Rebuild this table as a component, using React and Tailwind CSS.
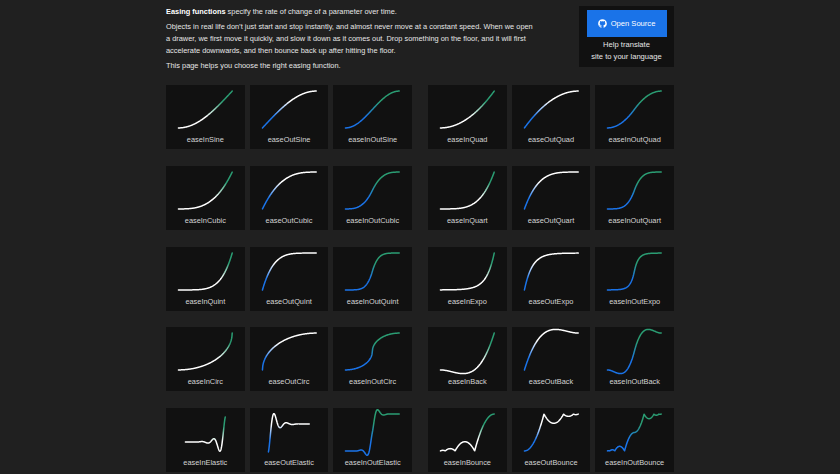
import { FaGithub } from "react-icons/fa";

const PI = Math.PI;
const c1 = 1.70158;
const c2 = c1 * 1.525;
const c3 = c1 + 1;
const c4 = (2 * PI) / 3;
const c5 = (2 * PI) / 4.5;

function bounceOut(x) {
  const n1 = 7.5625;
  const d1 = 2.75;
  if (x < 1 / d1) return n1 * x * x;
  if (x < 2 / d1) return n1 * (x -= 1.5 / d1) * x + 0.75;
  if (x < 2.5 / d1) return n1 * (x -= 2.25 / d1) * x + 0.9375;
  return n1 * (x -= 2.625 / d1) * x + 0.984375;
}

const fns = {
  easeInSine: (x) => 1 - Math.cos((x * PI) / 2),
  easeOutSine: (x) => Math.sin((x * PI) / 2),
  easeInOutSine: (x) => -(Math.cos(PI * x) - 1) / 2,
  easeInQuad: (x) => x * x,
  easeOutQuad: (x) => 1 - (1 - x) * (1 - x),
  easeInOutQuad: (x) => (x < 0.5 ? 2 * x * x : 1 - Math.pow(-2 * x + 2, 2) / 2),
  easeInCubic: (x) => x * x * x,
  easeOutCubic: (x) => 1 - Math.pow(1 - x, 3),
  easeInOutCubic: (x) => (x < 0.5 ? 4 * x * x * x : 1 - Math.pow(-2 * x + 2, 3) / 2),
  easeInQuart: (x) => x * x * x * x,
  easeOutQuart: (x) => 1 - Math.pow(1 - x, 4),
  easeInOutQuart: (x) => (x < 0.5 ? 8 * x * x * x * x : 1 - Math.pow(-2 * x + 2, 4) / 2),
  easeInQuint: (x) => x * x * x * x * x,
  easeOutQuint: (x) => 1 - Math.pow(1 - x, 5),
  easeInOutQuint: (x) => (x < 0.5 ? 16 * Math.pow(x, 5) : 1 - Math.pow(-2 * x + 2, 5) / 2),
  easeInExpo: (x) => (x === 0 ? 0 : Math.pow(2, 10 * x - 10)),
  easeOutExpo: (x) => (x === 1 ? 1 : 1 - Math.pow(2, -10 * x)),
  easeInOutExpo: (x) =>
    x === 0
      ? 0
      : x === 1
      ? 1
      : x < 0.5
      ? Math.pow(2, 20 * x - 10) / 2
      : (2 - Math.pow(2, -20 * x + 10)) / 2,
  easeInCirc: (x) => 1 - Math.sqrt(1 - x * x),
  easeOutCirc: (x) => Math.sqrt(1 - Math.pow(x - 1, 2)),
  easeInOutCirc: (x) =>
    x < 0.5
      ? (1 - Math.sqrt(1 - Math.pow(2 * x, 2))) / 2
      : (Math.sqrt(1 - Math.pow(-2 * x + 2, 2)) + 1) / 2,
  easeInBack: (x) => c3 * x * x * x - c1 * x * x,
  easeOutBack: (x) => 1 + c3 * Math.pow(x - 1, 3) + c1 * Math.pow(x - 1, 2),
  easeInOutBack: (x) =>
    x < 0.5
      ? (Math.pow(2 * x, 2) * ((c2 + 1) * 2 * x - c2)) / 2
      : (Math.pow(2 * x - 2, 2) * ((c2 + 1) * (x * 2 - 2) + c2) + 2) / 2,
  easeInElastic: (x) =>
    x === 0 ? 0 : x === 1 ? 1 : -Math.pow(2, 10 * x - 10) * Math.sin((x * 10 - 10.75) * c4),
  easeOutElastic: (x) =>
    x === 0 ? 0 : x === 1 ? 1 : Math.pow(2, -10 * x) * Math.sin((x * 10 - 0.75) * c4) + 1,
  easeInOutElastic: (x) =>
    x === 0
      ? 0
      : x === 1
      ? 1
      : x < 0.5
      ? -(Math.pow(2, 20 * x - 10) * Math.sin((20 * x - 11.125) * c5)) / 2
      : (Math.pow(2, -20 * x + 10) * Math.sin((20 * x - 11.125) * c5)) / 2 + 1,
  easeInBounce: (x) => 1 - bounceOut(1 - x),
  easeOutBounce: (x) => bounceOut(x),
  easeInOutBounce: (x) =>
    x < 0.5 ? (1 - bounceOut(1 - 2 * x)) / 2 : (1 + bounceOut(2 * x - 1)) / 2,
};

// where value 0 / value 1 sit inside the card (px)
const frames = {
  easeInElastic: { x0: 19.5, w: 40, y0: 34, y1: 9 },
  easeOutElastic: { x0: 18.5, w: 41, y0: 44, y1: 16 },
};
const baseFrame = { x0: 12.5, w: 54, y0: 43, y1: 6 };

const colors = {
  In: ["#ffffff", "#2a9d73"],
  Out: ["#1a73e8", "#ffffff"],
  InOut: ["#1a73e8", "#2a9d73"],
};

function kind(name) {
  if (name.startsWith("easeInOut")) return "InOut";
  if (name.startsWith("easeOut")) return "Out";
  return "In";
}

function pathFor(name) {
  const f = fns[name];
  const fr = frames[name] || baseFrame;
  const pts = [];
  for (let i = 0; i <= 160; i++) {
    const t = i / 160;
    const x = fr.x0 + t * fr.w;
    const y = fr.y0 - f(t) * (fr.y0 - fr.y1);
    pts.push(`${i === 0 ? "M" : "L"}${x.toFixed(2)} ${y.toFixed(2)}`);
  }
  return pts.join(" ");
}

function Card({ name }) {
  const [bottom, top] = colors[kind(name)];
  const id = `g-${name}`;
  return (
    <div className="h-[64px] bg-[#111111] flex flex-col">
      <svg viewBox="0 0 79 49" className="block w-full h-[49px] overflow-visible">
        <defs>
          <linearGradient id={id} x1="0" y1="1" x2="0" y2="0">
            <stop offset="0.3" stopColor={bottom} />
            <stop offset="0.72" stopColor={top} />
          </linearGradient>
        </defs>
        <path
          d={pathFor(name)}
          fill="none"
          stroke={`url(#${id})`}
          strokeWidth="1.5"
          strokeLinecap="round"
          strokeLinejoin="round"
        />
      </svg>
      <div className="text-center text-[7.4px] leading-[12px] text-[#d4d4d4]">{name}</div>
    </div>
  );
}

const left = ["Sine", "Cubic", "Quint", "Circ", "Elastic"];
const right = ["Quad", "Quart", "Expo", "Back", "Bounce"];

function Group({ families }) {
  return (
    <div className="w-[246px] grid grid-cols-3 gap-x-[5px] gap-y-[16.75px]">
      {families.flatMap((f) =>
        ["easeIn", "easeOut", "easeInOut"].map((p) => <Card key={p + f} name={p + f} />)
      )}
    </div>
  );
}

export default function App() {
  return (
    <div className="min-h-screen bg-[#202020] font-['Liberation_Sans',Arial,sans-serif] overflow-hidden">
      <div className="w-[508px] mx-auto pt-[6px]">
        <header className="flex items-start justify-between">
          <div className="w-[368px] text-[7.4px] leading-[12px] text-[#e6e6e6] space-y-[3px]">
            <p>
              <b className="font-bold text-white">Easing functions</b> specify the rate of change
              of a parameter over time.
            </p>
            <p>
              Objects in real life don’t just start and stop instantly, and almost never move at a
              constant speed. When we open a drawer, we first move it quickly, and slow it down as
              it comes out. Drop something on the floor, and it will first accelerate downwards,
              and then bounce back up after hitting the floor.
            </p>
            <p>This page helps you choose the right easing function.</p>
          </div>
          <div className="w-[95px] h-[61px] bg-[#111111] flex flex-col items-center pt-[4px]">
            <button className="w-[80px] h-[27px] bg-[#1a73e8] text-white text-[7.6px] flex items-center justify-center gap-[4px]">
              <FaGithub className="w-[9px] h-[9px]" />
              Open Source
            </button>
            <div className="mt-[2px] text-center text-[7.6px] leading-[12px] text-[#e6e6e6]">
              Help translate
              <br />
              site to your language
            </div>
          </div>
        </header>
        <div className="mt-[13px] flex justify-between">
          <Group families={left} />
          <Group families={right} />
        </div>
      </div>
    </div>
  );
}
